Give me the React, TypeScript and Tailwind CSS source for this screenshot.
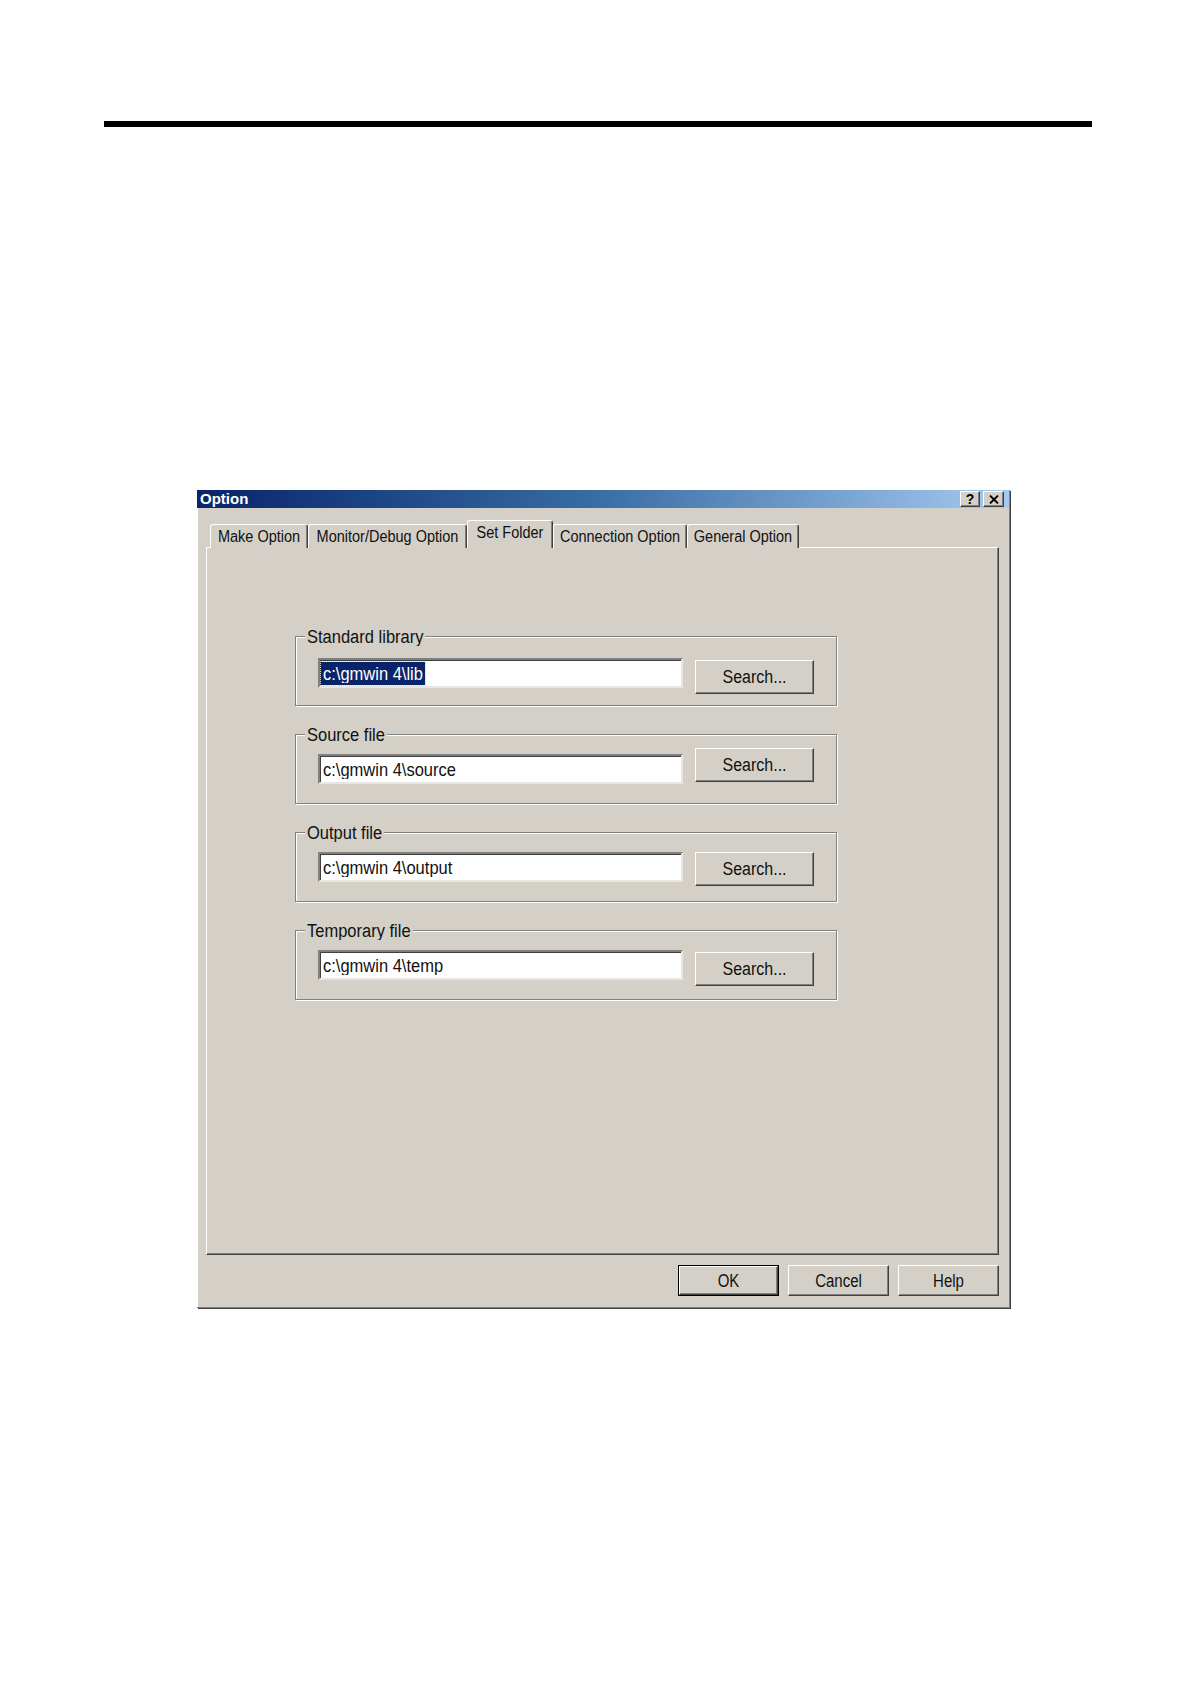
import type { ReactNode } from "react";

const font = "font-['Liberation_Sans',Arial,sans-serif]";

const tabs = [
  { label: "Make Option", w: "w-[98px]" },
  { label: "Monitor/Debug Option", w: "w-[159px]" },
  { label: "Set Folder", w: "w-[86px]", active: true },
  { label: "Connection Option", w: "w-[134px]" },
  { label: "General Option", w: "w-[112px]" },
];

const folders = [
  { label: "Standard library", path: "c:\\gmwin 4\\lib", selected: true, inputTop: "mt-[21px]", btnTop: "mt-[23px]" },
  { label: "Source file", path: "c:\\gmwin 4\\source", inputTop: "mt-[19px]", btnTop: "mt-[13px]" },
  { label: "Output file", path: "c:\\gmwin 4\\output", inputTop: "mt-[19px]", btnTop: "mt-[19px]" },
  { label: "Temporary file", path: "c:\\gmwin 4\\temp", inputTop: "mt-[19px]", btnTop: "mt-[21px]" },
];

// text in the scan is stretched vertically
function T({ children, tall }: { children: ReactNode; tall?: boolean }) {
  return (
    <span className={`inline-block leading-none ${tall ? "scale-y-[1.2]" : "scale-y-[1.1]"}`}>{children}</span>
  );
}

const raised =
  "border border-t-white border-l-white border-r-[#404040] border-b-[#404040] shadow-[inset_-1px_-1px_0_#808080] bg-[#d4d0c8]";

function GroupBox({ f }: { f: (typeof folders)[number] }) {
  return (
    <div className="relative h-[70px] w-[542px] border border-[#808080] shadow-[inset_1px_1px_0_#fff,1px_1px_0_#fff]">
      <div className="absolute -top-[11px] left-[9px] h-[20px] bg-[#d4d0c8] px-[2px] text-[16.5px] leading-[20px] text-[#111]">
        <T>{f.label}</T>
      </div>
      <div className="flex items-start pl-[22px]">
        <div
          className={`${f.inputTop} flex h-[30px] w-[365px] items-center border-2 border-t-[#808080] border-l-[#808080] border-r-[#e8e6e0] border-b-[#e8e6e0] bg-white pl-[1px] shadow-[inset_1px_1px_0_#404040] text-[16.5px] text-[#111]`}
        >
          <span
            className={
              f.selected
                ? "flex h-[23px] items-center bg-[#0a246a] px-[2px] text-white outline outline-1 outline-dotted outline-[#d4d0c8]"
                : "flex h-[23px] items-center px-[2px]"
            }
          >
            <T>{f.path}</T>
          </span>
        </div>
        <button
          className={`${f.btnTop} ml-[12px] flex h-[34px] w-[119px] items-center justify-center ${raised} text-[16px] text-[#111]`}
        >
          <T>Search...</T>
        </button>
      </div>
    </div>
  );
}

export default function App() {
  return (
    <div className={`relative h-[1684px] w-[1190px] overflow-hidden bg-white ${font}`}>
      <div className="pt-[121px]">
        <div className="ml-[104px] h-[6px] w-[988px] bg-black" />
      </div>

      <div className="ml-[197px] mt-[363px] flex h-[818px] w-[813px] flex-col border-r border-b border-[#808080] bg-[#d4d0c8] shadow-[inset_1px_0_0_#fff,1px_1px_0_#404040]">
        {/* title bar */}
        <div className="flex h-[18px] items-start justify-between bg-gradient-to-r from-[#0a246a] via-[#3a6ea5] to-[#a6caf0] pl-[3px] pr-[5px]">
          <span className="text-[15px] font-bold leading-[17px] text-white">Option</span>
          <div className="mt-[1px] flex gap-[3px]">
            <div className={`flex h-[16px] w-[20px] items-center justify-center ${raised} text-[14px] font-bold leading-none text-black`}>
              ?
            </div>
            <div className={`flex h-[16px] w-[21px] items-center justify-center ${raised}`}>
              <svg width="10" height="9" viewBox="0 0 10 9">
                <path d="M1 0.5 L9 8.5 M9 0.5 L1 8.5" stroke="#000" strokeWidth="1.8" />
              </svg>
            </div>
          </div>
        </div>

        {/* tab strip */}
        <div className="relative z-10 -mb-[1px] mt-[12px] flex h-[28px] items-end pl-[13px]">
          {tabs.map((t) => (
            <div
              key={t.label}
              className={`${t.w} flex items-center justify-center rounded-t-[3px] border-t border-l border-r border-t-white border-l-white border-r-[#404040] bg-[#d4d0c8] text-[14.5px] text-[#111] shadow-[inset_-1px_0_0_#808080] ${
                t.active ? "h-[28px] pb-[4px]" : "h-[24px]"
              }`}
            >
              <T tall>{t.label}</T>
            </div>
          ))}
        </div>

        {/* panel */}
        <div className="ml-[9px] h-[708px] w-[793px] border border-t-white border-l-white border-r-[#404040] border-b-[#404040] shadow-[inset_-1px_-1px_0_#808080]">
          <div className="flex flex-col gap-[28px] pl-[88px] pt-[88px]">
            {folders.map((f) => (
              <GroupBox key={f.label} f={f} />
            ))}
          </div>
        </div>

        {/* buttons */}
        <div className="mt-[10px] flex justify-end gap-[9px] pr-[10px]">
          <div className="border border-black">
            <button className={`flex h-[29px] w-[99px] items-center justify-center ${raised} text-[15px] text-[#111]`}>
              <T tall>OK</T>
            </button>
          </div>
          <button className={`flex h-[31px] w-[101px] items-center justify-center ${raised} text-[15px] text-[#111]`}>
            <T tall>Cancel</T>
          </button>
          <button className={`flex h-[31px] w-[101px] items-center justify-center ${raised} text-[15px] text-[#111]`}>
            <T tall>Help</T>
          </button>
        </div>
      </div>
    </div>
  );
}
